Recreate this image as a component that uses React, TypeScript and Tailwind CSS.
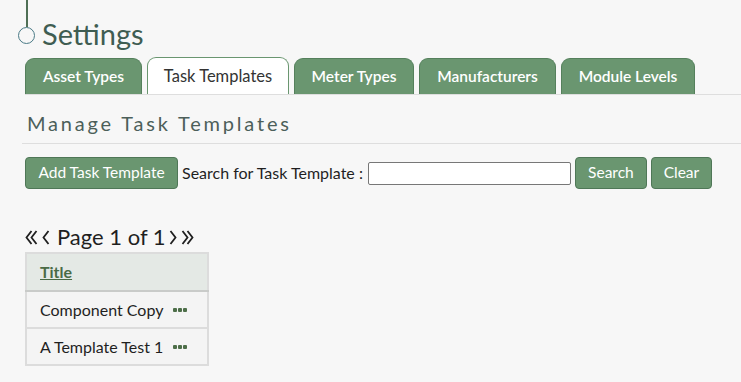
import React from "react";

const tabs = [
  { name: "Asset Types", w: "w-[117px]" },
  { name: "Task Templates", w: "w-[142px]", active: true },
  { name: "Meter Types", w: "w-[120px]" },
  { name: "Manufacturers", w: "w-[137px]" },
  { name: "Module Levels", w: "w-[134px]" },
];

const rows = ["Component Copy", "A Template Test 1"];

function Dots() {
  return (
    <svg width="14" height="4" viewBox="0 0 14 4" className="ml-[10px]">
      <rect x="0" y="0" width="4" height="4" rx="1" fill="#4d6e48" />
      <rect x="5" y="0" width="4" height="4" rx="1" fill="#4d6e48" />
      <rect x="10" y="0" width="4" height="4" rx="1" fill="#4d6e48" />
    </svg>
  );
}

function Angle({ double, right }: { double?: boolean; right?: boolean }) {
  const w = double ? 13 : 8;
  return (
    <svg
      width={w}
      height="15"
      viewBox={`0 0 ${w} 15`}
      className={right ? "-scale-x-100" : ""}
      fill="none"
      stroke="#1f1f1f"
      strokeWidth="1.8"
    >
      <polyline points="6.5,1 1.5,7.5 6.5,14" />
      {double && <polyline points="11.5,1 6.5,7.5 11.5,14" />}
    </svg>
  );
}

export default function App() {
  return (
    <div className="w-[741px] h-[382px] overflow-hidden bg-[#f7f7f7] font-['Lato','Liberation_Sans',sans-serif] text-[#222]">
      <div className="flex items-start pl-[18px]">
        <div className="flex flex-col items-center w-[17px]">
          <div className="w-[2px] h-[27px] bg-[#4f6f55]" />
          <div className="w-[17px] h-[17px] rounded-full border-[1.5px] border-[#4a7a86]" />
        </div>
        <h1 className="ml-[7px] mt-[17px] text-[29px] leading-[34px] text-[#3f5d52]">Settings</h1>
      </div>

      <div className="mt-[7px] ml-[25px] flex items-end gap-[5px] border-b border-[#dedede] h-[37px]">
        {tabs.map((t) =>
          t.active ? (
            <div
              key={t.name}
              className={`${t.w} h-[37px] rounded-t-[9px] border border-b-0 border-[#6a9670] bg-white text-[#333] text-[16.5px] flex items-center justify-center`}
            >
              {t.name}
            </div>
          ) : (
            <div
              key={t.name}
              className={`${t.w} h-[36px] rounded-t-[9px] border border-b-0 border-[#55805c] bg-[#6a9670] text-white font-semibold text-[15.5px] flex items-center justify-center`}
            >
              {t.name}
            </div>
          ),
        )}
      </div>

      <div className="ml-[22px] mt-[17px] border-b border-[#dedede] pb-[8px]">
        <h2 className="ml-[5px] text-[20px] leading-[23px] tracking-[2.8px] text-[#4c5f5a]">
          Manage Task Templates
        </h2>
      </div>

      <div className="ml-[25px] mt-[13px] flex items-center gap-[4px]">
        <button className="h-[32px] w-[153px] rounded-[4px] border border-[#4f7757] bg-[#6a9670] text-white text-[15.5px]">
          Add Task Template
        </button>
        <span className="text-[16px] text-[#1f1f1f]">Search for Task Template :</span>
        <input className="ml-[1px] h-[23px] w-[203px] border border-[#777] bg-white rounded-[2px]" />
        <button className="h-[32px] w-[72px] rounded-[4px] border border-[#4f7757] bg-[#6a9670] text-white text-[15.5px]">
          Search
        </button>
        <button className="h-[32px] w-[61px] rounded-[4px] border border-[#4f7757] bg-[#6a9670] text-white text-[15.5px]">
          Clear
        </button>
      </div>

      <div className="ml-[25px] mt-[35px] flex items-center h-[26px] text-[22px] leading-[26px] text-[#1f1f1f]">
        <Angle double />
        <span className="ml-[4px]" />
        <Angle />
        <span className="ml-[7px]">Page 1 of 1</span>
        <span className="ml-[3px]" />
        <Angle right />
        <span className="ml-[4px]" />
        <Angle double right />
      </div>

      <table className="ml-[25px] mt-[2px] w-[184px] border-collapse border-2 border-[#dcdcdc]">
        <thead>
          <tr className="h-[38px] bg-[#e4e9e5] border-b-2 border-[#c9cbc9]">
            <th className="text-left pl-[13px] text-[16px] font-bold text-[#4a6b46] underline">Title</th>
          </tr>
        </thead>
        <tbody>
          {rows.map((r) => (
            <tr key={r} className="h-[37px] bg-[#f4f4f4] border-t-2 border-[#dcdcdc]">
              <td className="pl-[13px] text-[16px] text-[#1f1f1f]">
                <div className="flex items-center">
                  {r}
                  <Dots />
                </div>
              </td>
            </tr>
          ))}
        </tbody>
      </table>
    </div>
  );
}
